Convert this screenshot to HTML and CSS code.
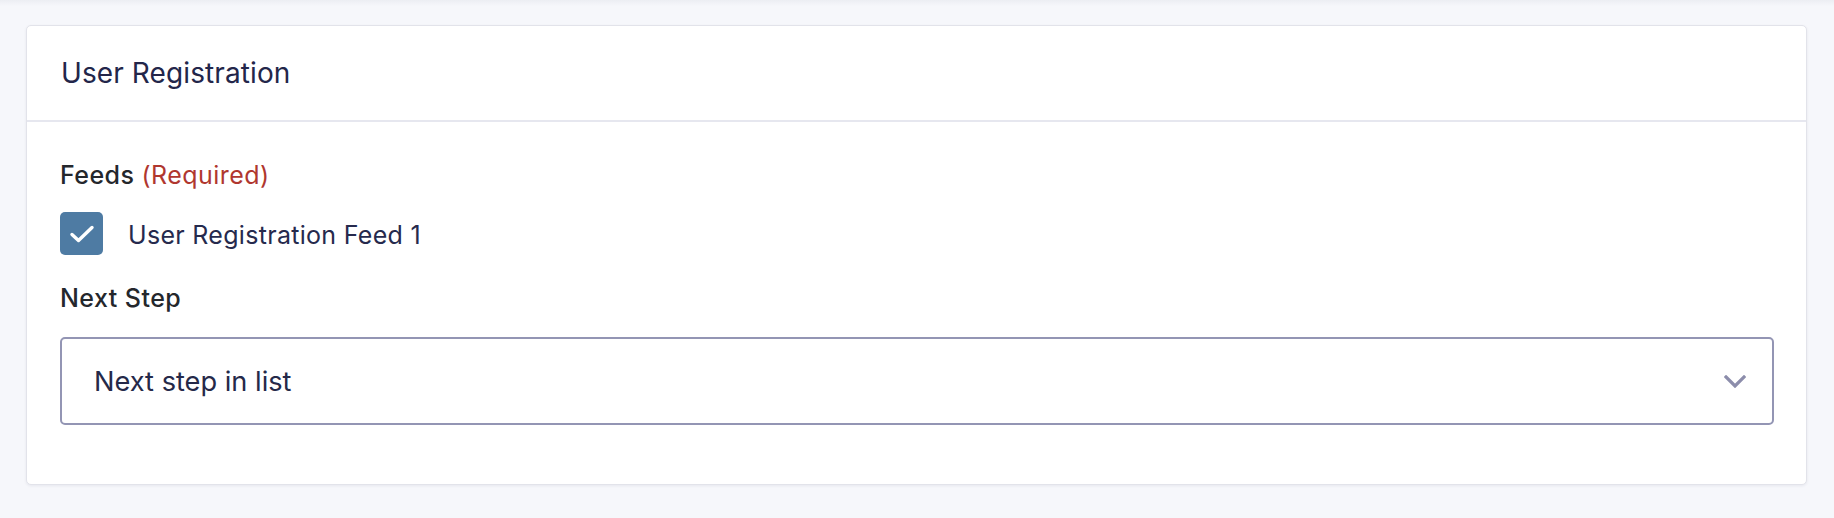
FILE: index.html
```html
<!DOCTYPE html>
<html lang="en">
<head>
<meta charset="utf-8">
<title>User Registration</title>
<link rel="stylesheet" href="styles.css">
</head>
<body>
<div class="top-shade"></div>
<section class="card">
  <header class="card-header">
    <h2 class="card-title">User Registration</h2>
  </header>
  <div class="card-body">
    <div class="field">
      <div class="field-label">Feeds <span class="required">(Required)</span></div>
      <label class="check-row">
        <span class="checkbox">
          <svg viewBox="0 0 26 20" width="26" height="20" aria-hidden="true"><path d="M3 10.5l6.5 6L23 3.5" fill="none" stroke="#fff" stroke-width="3.4" stroke-linecap="round" stroke-linejoin="round"/></svg>
        </span>
        <span class="check-text">User Registration Feed 1</span>
      </label>
    </div>
    <div class="field field-next">
      <div class="field-label">Next Step</div>
      <div class="select">
        <span class="select-value">Next step in list</span>
        <svg class="chevron" viewBox="0 0 22 13" width="22" height="13" aria-hidden="true"><path d="M2 2l9 9 9-9" fill="none" stroke="#8c8dab" stroke-width="3.2" stroke-linecap="square" stroke-linejoin="miter"/></svg>
      </div>
    </div>
  </div>
</section>
</body>
</html>
```

FILE: styles.css
```css
html, body {
  margin: 0;
  padding: 0;
}
body {
  background: #f6f7fb;
  font-family: Inter, "Noto Sans", "Liberation Sans", sans-serif;
  height: 518px;
  overflow: hidden;
}
.top-shade {
  height: 6px;
  background: linear-gradient(to bottom, #eceef3, #f6f7fb);
}
.card {
  margin: 19px 27px 0 26px;
  background: #fff;
  border: 1px solid #e2e3ea;
  border-radius: 5px;
  box-shadow: 0 1px 3px rgba(30, 35, 70, 0.07);
}
.card-header {
  height: 94px;
  display: flex;
  align-items: center;
  padding: 0 34px;
  border-bottom: 2px solid #e6e7ef;
}
.card-title {
  margin: 0;
  font-size: 28px;
  font-weight: 400;
  color: #23264a;
  letter-spacing: 0.1px;
}
.card-body {
  padding: 39px 32px 59px 33px;
}
.field-label {
  font-size: 25px;
  line-height: 29px;
  font-weight: 500;
  color: #24272c;
  letter-spacing: 0.45px;
}
.required {
  color: #b0372f;
  font-weight: 400;
}
.check-row {
  display: flex;
  align-items: center;
  gap: 25px;
  margin-top: 22px;
}
.checkbox {
  width: 43px;
  height: 43px;
  border-radius: 5px;
  background: #4e7ba3;
  display: flex;
  align-items: center;
  justify-content: center;
}
.checkbox svg {
  width: 26px;
  height: 20px;
}
.check-text {
  font-size: 25px;
  color: #262a4d;
  padding-top: 3px;
  letter-spacing: 0.3px;
}
.field-next {
  margin-top: 29px;
}
.select {
  margin-top: 24px;
  height: 84px;
  border: 2px solid #9395b4;
  border-radius: 5px;
  display: flex;
  align-items: center;
  justify-content: space-between;
  padding: 0 26px 0 32px;
}
.select-value {
  font-size: 27.2px;
  color: #252949;
}
.chevron {
  width: 22px;
  height: 13px;
}
```
